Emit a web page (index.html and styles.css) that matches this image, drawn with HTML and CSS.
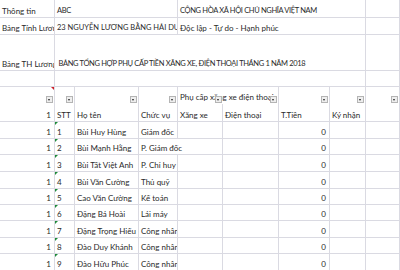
FILE: index.html
```html
<!DOCTYPE html>
<html lang="vi">
<head>
<meta charset="utf-8">
<link rel="stylesheet" href="styles.css">
</head>
<body>
<table class="sheet">
<colgroup>
<col class="ca"><col class="cb"><col class="cc"><col class="cd"><col class="ce"><col class="cf"><col class="cg"><col class="ch"><col class="ci"><col class="cj">
</colgroup>
<tr class="h18"><td>Thông tin</td><td colspan="3" class="caps">ABC</td><td colspan="4" class="caps">CỘNG HÒA XÃ HỘI CHỦ NGHĨA VIỆT NAM</td><td></td><td></td></tr>
<tr class="h17"><td>Bảng Tính Lương</td><td colspan="3" class="caps wide">23 NGUYỄN LƯƠNG BẰNG HẢI DƯƠNG</td><td colspan="4">Độc lập - Tự do - Hạnh phúc</td><td></td><td></td></tr>
<tr class="h36"><td>Bảng TH Lương</td><td colspan="7" class="caps">&nbsp;BẢNG TỔNG HỢP PHỤ CẤP TIỀN XĂNG XE, ĐIỆN THOẠI THÁNG 1 NĂM 2018</td><td></td><td></td></tr>
<tr class="h16"><td></td><td colspan="7"></td><td></td><td></td></tr>
<tr class="filter h17">
<td><span class="note"></span><span class="fb"></span></td>
<td><span class="fb"></span></td>
<td><span class="fb"></span></td>
<td><span class="fb"></span></td>
<td class="spill">Phụ cấp xăng xe điện thoại<span class="fb"></span></td>
<td><span class="fb"></span></td>
<td><span class="fb"></span></td>
<td><span class="fb"></span></td>
<td><span class="fb"></span></td>
<td></td>
</tr>
<tr class="h18"><td class="num">1</td><td>STT</td><td>Họ tên</td><td>Chức vụ</td><td>Xăng xe</td><td>Điện thoại</td><td>T.Tiền</td><td>Ký nhận</td><td></td><td></td></tr>
<tr class="h17"><td class="num">1</td><td class="txt">1</td><td>Bùi Huy Hùng</td><td>Giám đốc</td><td></td><td></td><td class="num">0</td><td></td><td></td><td></td></tr>
<tr class="h16"><td class="num">1</td><td class="txt">2</td><td>Bùi Mạnh Hằng</td><td class="spill">P. Giám đốc</td><td></td><td></td><td class="num">0</td><td></td><td></td><td></td></tr>
<tr class="h17"><td class="num">1</td><td class="txt">3</td><td>Bùi Tất Việt Anh</td><td>P. Chỉ huy</td><td></td><td></td><td class="num">0</td><td></td><td></td><td></td></tr>
<tr class="h17"><td class="num">1</td><td class="txt">4</td><td>Bùi Văn Cường</td><td>Thủ quỹ</td><td></td><td></td><td class="num">0</td><td></td><td></td><td></td></tr>
<tr class="h16"><td class="num">1</td><td class="txt">5</td><td>Cao Văn Cường</td><td>Kế toán</td><td></td><td></td><td class="num">0</td><td></td><td></td><td></td></tr>
<tr class="h16"><td class="num">1</td><td class="txt">6</td><td>Đặng Bá Hoài</td><td>Lái máy</td><td></td><td></td><td class="num">0</td><td></td><td></td><td></td></tr>
<tr class="h17"><td class="num">1</td><td class="txt">7</td><td>Đặng Trọng Hiếu</td><td>Công nhân</td><td></td><td></td><td class="num">0</td><td></td><td></td><td></td></tr>
<tr class="h16"><td class="num">1</td><td class="txt">8</td><td>Đào Duy Khánh</td><td>Công nhân</td><td></td><td></td><td class="num">0</td><td></td><td></td><td></td></tr>
<tr class="h17"><td class="num">1</td><td class="txt">9</td><td>Đào Hữu Phúc</td><td>Công nhân</td><td></td><td></td><td class="num">0</td><td></td><td></td><td></td></tr>
</table>
</body>
</html>
```
FILE: styles.css
```css
html, body {
  margin: 0;
  padding: 0;
  background: #fff;
  overflow: hidden;
}

.sheet {
  border-collapse: separate;
  border-spacing: 0;
  table-layout: fixed;
  width: 460px;
  font-family: Lato, "Liberation Sans", sans-serif;
  font-size: 8px;
  color: #2a2a2a;
}

.ca { width: 55px; }
.cb { width: 20px; }
.cc { width: 64px; }
.cd { width: 39px; }
.ce { width: 45px; }
.cf { width: 56px; }
.cg { width: 51px; }
.ch { width: 36px; }
.ci { width: 34px; }
.cj { width: 60px; }

.sheet td {
  box-sizing: border-box;
  border-right: 1px solid #dadae2;
  border-bottom: 1px solid #dadae2;
  padding: 0 2px 1px 2px;
  vertical-align: bottom;
  white-space: nowrap;
  overflow: hidden;
  line-height: 10px;
  position: relative;
}

.sheet td.caps {
  font-size: 7.5px;
  letter-spacing: -0.35px;
}

.sheet td.wide {
  letter-spacing: 0;
}

.h16 td { height: 16px; }
.h17 td { height: 17px; }
.h18 td { height: 18px; }
.h36 td { height: 36px; }

.filter td {
  border-bottom: none;
  padding-bottom: 2px;
}

.sheet td.spill {
  overflow: visible;
  border-right: none;
}

.sheet td.num {
  text-align: right;
  padding-right: 3px;
}

.txt::before {
  content: "";
  position: absolute;
  left: 0;
  top: 0;
  border-top: 3px solid #1e8a3a;
  border-right: 3px solid transparent;
}

.note {
  position: absolute;
  right: 0;
  top: 0;
  border-top: 3px solid #d0202a;
  border-left: 3px solid transparent;
}

.fb {
  position: absolute;
  right: 1px;
  bottom: 1px;
  width: 7px;
  height: 7px;
  box-sizing: border-box;
  background: #eeeeee;
  border: 1px solid #b4b4b4;
  z-index: 1;
}

.fb::after {
  content: "";
  position: absolute;
  left: 1px;
  top: 2px;
  border-top: 2px solid #222;
  border-left: 1.5px solid transparent;
  border-right: 1.5px solid transparent;
}
```
